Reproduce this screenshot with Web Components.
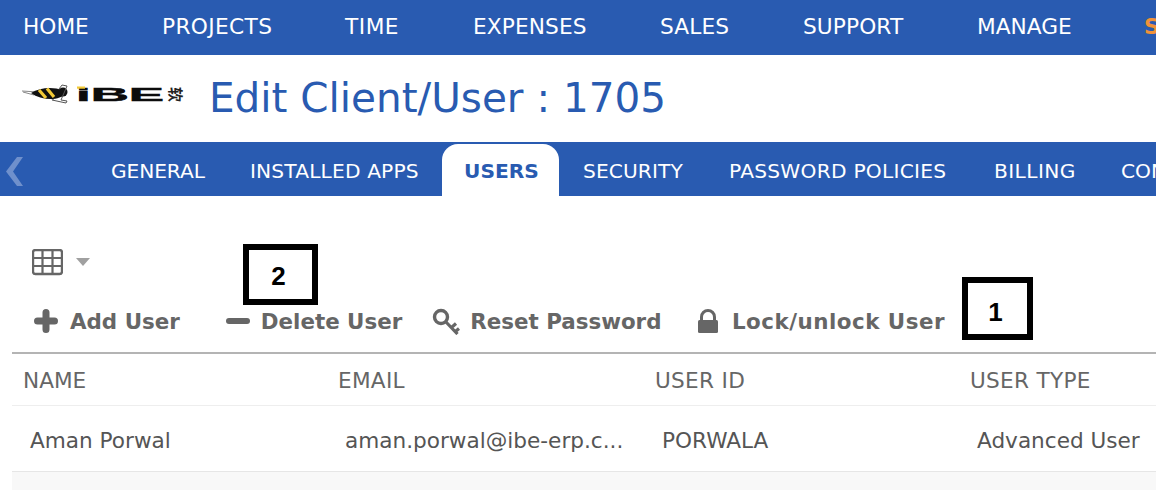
<!DOCTYPE html>
<html>
<head>
<meta charset="utf-8">
<title>Edit Client/User</title>
<style>
  html, body { margin: 0; background: #fff; }
  body { width: 1156px; height: 490px; overflow: hidden; position: relative; font-family: "DejaVu Sans", sans-serif; }
</style>
</head>
<body>
<top-nav></top-nav>
<page-title>Edit Client/User : 1705</page-title>
<tab-bar></tab-bar>
<user-toolbar></user-toolbar>
<user-table></user-table>
<note-box num="2" style="left:243px;top:244px;width:75px;height:61px;padding:4px 4px 0 0"></note-box>
<note-box num="1" style="left:962px;top:277px;width:71px;height:63px;padding:8px 4px 0 0"></note-box>
<script>
class TopNav extends HTMLElement {
    connectedCallback() {
        this.attachShadow({ mode: 'open' });
        const items = [['HOME', 139, 0], ['PROJECTS', 183, .35], ['TIME', 128, .5], ['EXPENSES', 187, .1], ['SALES', 143, .1], ['SUPPORT', 174, .1], ['MANAGE', 167, 0]];
        this.shadowRoot.innerHTML = `
            <style>
                :host { display: flex; height: 55px; box-sizing: border-box; padding: 0 0 3px 23px; background: #295bb1; color: #fff; align-items: center; white-space: nowrap; overflow: hidden; font-size: 21.7px; }
                span { flex: none; }
                .cur { color: #f0923a; font-weight: bold; }
            </style>
            ${items.map(([t, w, s]) => `<span style="width:${w}px;letter-spacing:${s}px">${t}</span>`).join('')}
            <span class="cur">S</span>
        `;
    }
}

class PageTitle extends HTMLElement {
    connectedCallback() {
        this.attachShadow({ mode: 'open' });
        this.shadowRoot.innerHTML = `
            <style>
                :host { display: flex; height: 87px; box-sizing: border-box; padding: 0 0 2px 20px; align-items: center; color: #295bb1; font-size: 40.5px; white-space: nowrap; }
                svg { flex: none; margin-right: 24px; margin-top: -3px; }
            </style>
            <svg width="165" height="24" viewBox="0 0 165 24">
                <path d="M2 7 L18 8 L34 16 M3 8 L14 11" stroke="#888" stroke-width="1" fill="none"/>
                <path d="M11 9 C20 3 34 3 42 6 L46 9 C40 17 22 17 11 9Z" fill="#111"/>
                <path d="M19 6 L26 14 M27 4.5 L34 13" stroke="#f2c936" stroke-width="3.2" fill="none"/>
                <circle cx="43" cy="8" r="4.5" fill="#111"/>
                <path d="M39 5 L42 1 L47 2 L41 16 L47 17 L46 19 L32 16" stroke="#555" stroke-width="1" fill="none"/>
                <text x="56" y="16.5" font-family="Liberation Sans" font-weight="bold" font-size="19" textLength="88" lengthAdjust="spacingAndGlyphs" fill="#0c0c0c" stroke="#0c0c0c" stroke-width=".5">iBE</text>
                <rect x="57" y="2.500" width="8" height="2.200" fill="#f2c936"/>
                <text font-family="Noto Sans CJK SC" font-weight="bold" font-size="15" fill="#222" transform="translate(150 3) rotate(90)">软</text>
            </svg>
            <slot></slot>
        `;
    }
}

class TabBar extends HTMLElement {
    connectedCallback() {
        this.attachShadow({ mode: 'open' });
        const tabs = [['GENERAL', 139, -.1], ['INSTALLED APPS', 215, .15], ['USERS', 117, 0], ['SECURITY', 147, .1], ['PASSWORD POLICIES', 265, .25], ['BILLING', 127, .4], ['CON', 60, 0]];
        this.shadowRoot.innerHTML = `
            <style>
                :host { display: flex; height: 54px; background: #295bb1; color: #fff; align-items: flex-end; white-space: nowrap; overflow: hidden; font-size: 20.2px; padding-left: 6px; box-sizing: border-box; }
                svg { flex: none; align-self: flex-start; margin: 15px 64px 0 0; }
                .tab { flex: none; box-sizing: border-box; height: 52px; line-height: 54px; padding-left: 23px; }
                .tab.on { background: #fff; color: #295bb1; font-weight: bold; border-radius: 16px 16px 0 0; padding-left: 22px; }
                .tab.on + .tab { padding-left: 24px; }
            </style>
            <svg width="18" height="30" viewBox="0 0 18 30"><path d="M11 0 L0 14.5 L11 29 H17 L7 14.5 L17 0Z" fill="#6f90cc"/></svg>
            ${tabs.map(([t, w, s]) => `<div class="tab ${t === 'USERS' ? 'on' : ''}" style="width:${w}px;letter-spacing:${s}px">${t}</div>`).join('')}
        `;
    }
}

class UserToolbar extends HTMLElement {
    connectedCallback() {
        this.attachShadow({ mode: 'open' });
        this.shadowRoot.innerHTML = `
            <style>
                :host { display: block; height: 158px; margin-left: 12px; box-sizing: border-box; border-bottom: 2px solid #b4b4b4; color: #666; }
                .view { display: flex; align-items: center; gap: 12px; padding: 51px 0 0 20px; height: 31px; }
                .row { display: flex; align-items: center; margin-top: 27px; height: 32px; font-size: 21.4px; font-weight: bold; white-space: nowrap; }
                .btn { display: flex; align-items: center; }
                .btn svg { flex: none; }
                .lock span { letter-spacing: .5px; }
            </style>
            <div class="view">
                <svg width="31" height="27" viewBox="0 0 31 27"><rect x="1" y="1" width="29" height="24" rx="2.5" fill="none" stroke="#666" stroke-width="2.4"/><path d="M1 9H30M1 17H30M10.5 1V25M20.5 1V25" stroke="#666" stroke-width="2.2"/></svg>
                <svg width="16" height="10" viewBox="0 0 16 10" style="margin-top:-1px"><path d="M1 1H15L8 9Z" fill="#a0a0a0"/></svg>
            </div>
            <div class="row">
                <div class="btn" style="margin-left:22px">
                    <svg width="24" height="24" viewBox="0 0 24 24" style="margin-right:12px"><path d="M12 3.5V20.500M3.500 12H20.500" stroke="#666" stroke-width="7" stroke-linecap="round"/></svg>
                    <span>Add User</span>
                </div>
                <div class="btn" style="margin-left:46px">
                    <svg width="24" height="24" viewBox="0 0 24 24" style="margin-right:11px"><path d="M3 12H21" stroke="#666" stroke-width="6" stroke-linecap="round"/></svg>
                    <span>Delete User</span>
                </div>
                <div class="btn" style="margin-left:30px">
                    <svg width="28" height="28" viewBox="0 0 28 28" style="margin-right:10px"><circle cx="9" cy="10" r="6.500" fill="none" stroke="#666" stroke-width="3.4"/><path d="M13.500 14.500L25.500 27M19.500 20.500L24 16.500M23.500 24.500L27 21.500" stroke="#666" stroke-width="3.200"/></svg>
                    <span>Reset Password</span>
                </div>
                <div class="btn lock" style="margin-left:35.500px">
                    <svg width="22" height="26" viewBox="0 0 22 26" style="margin-right:13px"><path d="M4.500 12V9a6.500 6.500 0 0 1 13 0V12" fill="none" stroke="#666" stroke-width="3"/><rect x="1" y="12" width="20" height="13" rx="1.500" fill="#666"/></svg>
                    <span>Lock/unlock User</span>
                </div>
            </div>
        `;
    }
}

class UserTable extends HTMLElement {
    connectedCallback() {
        this.attachShadow({ mode: 'open' });
        this.shadowRoot.innerHTML = `
            <style>
                :host { display: block; margin-left: 12px; font-size: 21.6px; white-space: nowrap; }
                .head, .row { display: grid; grid-template-columns: 315px 317px 315px 1fr; align-items: center; }
                .head { height: 51px; color: #666; border-bottom: 1px solid #eee; }
                .head span { padding: 2px 0 0 11px; letter-spacing: .3px; }
                .head span:first-child { letter-spacing: 0; }
                .row { height: 65px; color: #555; border-bottom: 1px solid #e6e6e6; }
                .row span { padding: 4px 0 0 18px; }
                .rest { height: 18px; background: #f8f8f8; }
            </style>
            <div class="head"><span>NAME</span><span>EMAIL</span><span>USER ID</span><span>USER TYPE</span></div>
            <div class="row"><span>Aman Porwal</span><span>aman.porwal@ibe-erp.c...</span><span>PORWALA</span><span>Advanced User</span></div>
            <div class="rest"></div>
        `;
    }
}

class NoteBox extends HTMLElement {
    connectedCallback() {
        this.attachShadow({ mode: 'open' });
        this.shadowRoot.innerHTML = `
            <style>
                :host { position: absolute; display: flex; box-sizing: border-box; border: 6px solid #000; background: #fff; align-items: center; justify-content: center; color: #000; font: bold 26px "Liberation Sans", sans-serif; }
            </style>
            ${this.getAttribute('num')}
        `;
    }
}

customElements.define('top-nav', TopNav);
customElements.define('page-title', PageTitle);
customElements.define('tab-bar', TabBar);
customElements.define('user-toolbar', UserToolbar);
customElements.define('user-table', UserTable);
customElements.define('note-box', NoteBox);
</script>
</body>
</html>
